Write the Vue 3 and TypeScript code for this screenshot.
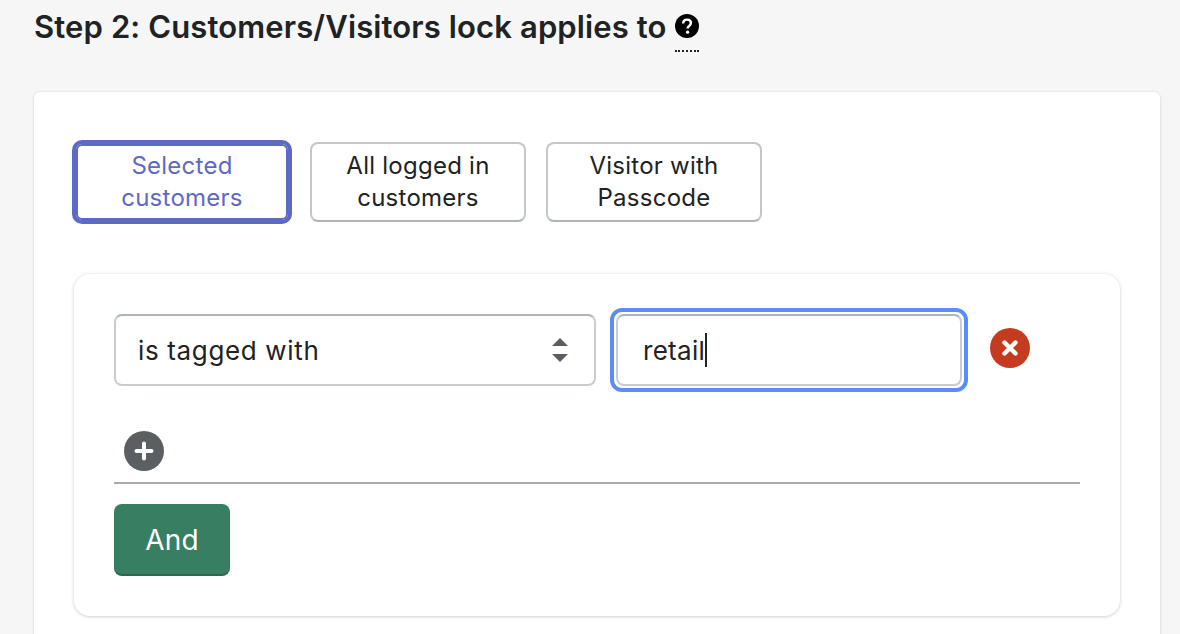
<script setup lang="ts">
const options: { id: string; lines: string[]; selected: boolean }[] = [
  { id: 'selected', lines: ['Selected', 'customers'], selected: true },
  { id: 'all', lines: ['All logged in', 'customers'], selected: false },
  { id: 'visitor', lines: ['Visitor with', 'Passcode'], selected: false },
];
</script>

<template>
  <main class="page">
    <h2 class="heading">
      <span>Step 2: Customers/Visitors lock applies to</span>
      <span class="help">
        <svg viewBox="0 0 24 24" width="24" height="24" aria-hidden="true">
          <circle cx="12" cy="12" r="12" fill="#000" />
          <path d="M8.2 9.4c0-2.3 1.7-3.8 3.9-3.8s3.8 1.4 3.8 3.4c0 1.6-.9 2.4-2 3.2-.9.6-1.2 1-1.2 1.9v.4" fill="none" stroke="#fff" stroke-width="2.4" />
          <circle cx="12.6" cy="18.2" r="1.6" fill="#fff" />
        </svg>
      </span>
    </h2>
    <section class="card">
      <div class="choices">
        <button v-for="o in options" :key="o.id" class="choice" :class="{ selected: o.selected }" type="button">
          <span v-for="l in o.lines" :key="l">{{ l }}</span>
        </button>
      </div>
      <div class="panel">
        <div class="row">
          <div class="select">
            <span>is tagged with</span>
            <svg viewBox="0 0 18 24" width="18" height="24" aria-hidden="true">
              <path d="M9 0 17 8H1Z M1 16H17L9 24Z" fill="#5c5f62" />
            </svg>
          </div>
          <div class="input"><span>retail</span><i class="caret"></i></div>
          <svg class="remove" viewBox="0 0 40 40" width="40" height="40" aria-hidden="true">
            <circle cx="20" cy="20" r="20" fill="#c43b20" />
            <path d="M14.5 14.5 25.5 25.5M25.5 14.5 14.5 25.5" stroke="#fff" stroke-width="4.4" stroke-linecap="round" />
          </svg>
        </div>
        <div class="add">
          <svg viewBox="0 0 40 40" width="40" height="40" aria-hidden="true">
            <circle cx="20" cy="20" r="20" fill="#5c5f62" />
            <path d="M20 12.5V27.5M12.5 20H27.5" stroke="#fff" stroke-width="4" stroke-linecap="round" />
          </svg>
        </div>
        <button class="and" type="button">And</button>
      </div>
    </section>
  </main>
</template>

<style scoped>
.page {
  width: 1180px;
  height: 634px;
  overflow: hidden;
  box-sizing: border-box;
  padding: 0 20px 0 34px;
  background: #f6f6f7;
  font-family: Inter, "Liberation Sans", sans-serif;
  color: #202223;
}
.heading {
  display: flex;
  align-items: flex-start;
  gap: 8px;
  height: 92px;
  margin: 0;
  padding-top: 9px;
  box-sizing: border-box;
  font-size: 31px;
  font-weight: 600;
  letter-spacing: 0.12px;
  line-height: 36px;
}
.help {
  display: block;
  height: 26px;
  width: 24px;
  margin-top: 5px;
  padding-bottom: 10px;
  border-bottom: 2px dotted #202223;
  line-height: 0;
}
.card {
  width: 1126px;
  height: 600px;
  box-sizing: border-box;
  padding: 50px 40px;
  background: #fff;
  border-radius: 6px;
  box-shadow: 0 0 3px rgba(23, 24, 24, 0.12), 0 1px 2px rgba(0, 0, 0, 0.1);
}
.choices {
  display: flex;
  gap: 20px;
  margin-bottom: 52px;
}
.choice {
  width: 216px;
  height: 80px;
  display: flex;
  flex-direction: column;
  align-items: center;
  justify-content: center;
  box-sizing: border-box;
  background: #fff;
  border: 2px solid #c4c7ca;
  border-bottom-color: #aeb4b9;
  border-radius: 8px;
  font: 400 24px/32px Inter, "Liberation Sans", sans-serif;
  letter-spacing: 0.25px;
  color: #202223;
  padding: 0;
}
.choice.selected {
  color: #5c6ac4;
  border-color: #5c6ac4;
  box-shadow: 0 0 0 2px #5c6ac4, inset 0 0 0 2px #5c6ac4;
}
.panel {
  width: 1046px;
  height: 342px;
  box-sizing: border-box;
  padding: 40px;
  border-radius: 16px;
  background: #fff;
  box-shadow: 0 0 5px rgba(23, 24, 24, 0.08), 0 1px 3px rgba(23, 24, 24, 0.15);
}
.row {
  display: flex;
  align-items: center;
  gap: 20px;
  height: 72px;
}
.select,
.input {
  height: 72px;
  display: flex;
  align-items: center;
  box-sizing: border-box;
  background: #fff;
  border: 2px solid #c9cccf;
  border-top-color: #aeb4b9;
  border-radius: 8px;
  font-size: 26px;
  letter-spacing: 0.65px;
  padding-left: 22px;
}
.select {
  width: 482px;
  justify-content: space-between;
  padding-right: 25px;
}
.input {
  width: 346px;
  position: relative;
  padding-left: 25px;
  letter-spacing: 0.3px;
}
.input::after {
  content: "";
  position: absolute;
  inset: -8px;
  border: 4px solid #5a8ef5;
  border-radius: 12px;
}
.caret {
  width: 2px;
  height: 34px;
  background: #202223;
}
.remove {
  margin: -4px 0 0 8px;
  flex: none;
}
.add {
  display: flex;
  height: 52px;
  margin-top: 44px;
  margin-bottom: 20px;
  padding-left: 10px;
  width: 956px;
  border-bottom: 2px solid #aaaaaa;
}
.add svg {
  margin-top: 1px;
  display: block;
}
.and {
  width: 116px;
  height: 72px;
  border: 0;
  border-bottom: 2px solid #2e6650;
  border-radius: 8px;
  background: #377e62;
  color: #fff;
  font: 400 28px/1 Inter, "Liberation Sans", sans-serif;
  letter-spacing: 0.1px;
  padding: 2px 0 0;
}
</style>
